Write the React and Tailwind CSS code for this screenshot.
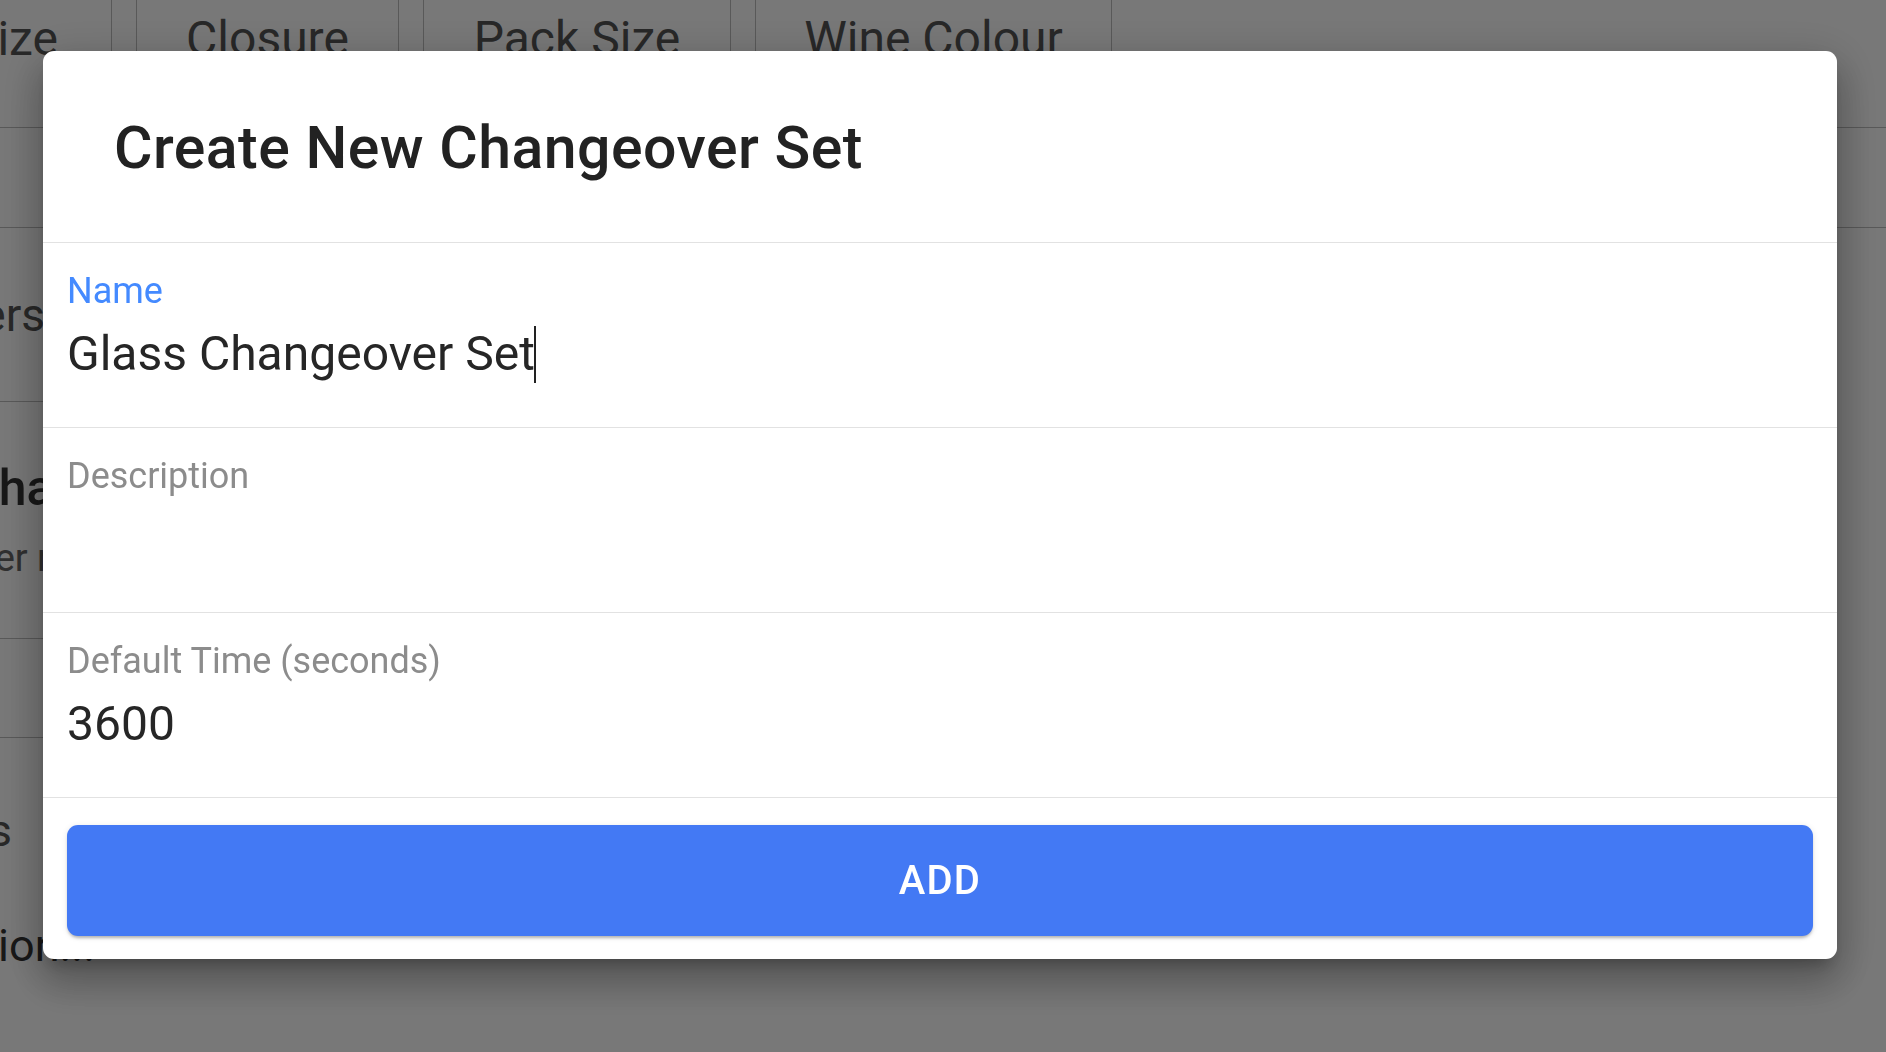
import React from "react";

function Sep({ single }) {
  return single ? (
    <div className="h-full w-0 shrink-0 border-l border-[#bdbdbd]" />
  ) : (
    <div className="h-full w-[26px] shrink-0 border-x border-[#bdbdbd]" />
  );
}

function Field({ label, value, focused, cursor }) {
  return (
    <div className="flex h-[185px] flex-col border-b border-[#e2e2e2] pl-6 pt-[30px]">
      <div
        className={
          "text-[36px] leading-none " + (focused ? "text-[#448aff]" : "text-[#8c8c8c]")
        }
      >
        {label}
      </div>
      <div className="mt-[21px] flex h-[48px] items-center text-[48px] leading-none text-[#262626]">
        <span>{value}</span>
        {cursor && <span className="ml-[-1px] h-[57px] w-[2px] bg-[#222]" />}
      </div>
    </div>
  );
}

export default function App() {
  return (
    <div className="relative h-[1052px] w-[1886px] overflow-hidden bg-white font-['Roboto',sans-serif]">
      {/* page behind the dialog */}
      <div className="flex flex-col text-[#555]">
        <div className="flex h-[128px] border-b border-[#bdbdbd] text-[48px] leading-none">
          <div className="flex w-[111px] shrink-0 justify-end overflow-hidden whitespace-nowrap pr-[53px] pt-[15px]">
            Bottle Size
          </div>
          <Sep />
          <div className="w-[261px] shrink-0 pt-[15px] text-center">Closure</div>
          <Sep />
          <div className="w-[306px] shrink-0 pt-[15px] text-center">Pack Size</div>
          <Sep />
          <div className="w-[355px] shrink-0 pt-[15px] text-center">Wine Colour</div>
          <Sep single />
          <div className="flex-1" />
        </div>
        <div className="h-[100px] border-b border-[#bdbdbd]" />
        <div className="flex w-[200px] flex-col">
          <div className="flex h-[174px] items-center justify-end overflow-hidden whitespace-nowrap border-b border-[#bdbdbd] pr-[155px] text-[46px] leading-none">
            Changeovers
          </div>
          <div className="flex h-[237px] flex-col justify-center overflow-hidden whitespace-nowrap border-b border-[#bdbdbd]">
            <div className="ml-[-34px] text-[50px] font-medium leading-none text-[#333]">Changeover Sets</div>
            <div className="mt-[26px] flex justify-end pr-[150px] text-[38px] leading-none text-[#666]">Changeover r</div>
          </div>
          <div className="h-[99px] border-b border-[#bdbdbd]" />
          <div className="flex h-[184px] items-center justify-end overflow-hidden whitespace-nowrap pr-[188px] text-[45px] leading-none">
            Settings
          </div>
          <div className="flex h-[46px] items-center overflow-hidden whitespace-nowrap text-[45px] leading-none text-[#333]">
            <span className="ml-[-92px]">Version...</span>
          </div>
        </div>
      </div>

      {/* backdrop + dialog */}
      <div className="fixed inset-0 flex items-start bg-black/[0.53] pl-[43px] pr-[49px] pt-[51px]">
        <div className="flex w-full flex-col overflow-hidden rounded-[11px] bg-white shadow-[0_11px_15px_-7px_rgba(0,0,0,0.25),0_24px_38px_3px_rgba(0,0,0,0.2),0_9px_46px_8px_rgba(0,0,0,0.14)]">
          <div className="flex h-[192px] items-center border-b border-[#e2e2e2] pl-[71px] pt-[1px]">
            <h2 className="text-[59px] font-medium leading-none tracking-[0.008em] text-[#222]">
              Create New Changeover Set
            </h2>
          </div>
          <Field label="Name" value="Glass Changeover Set" focused cursor />
          <Field label="Description" value="" />
          <Field label="Default Time (seconds)" value="3600" />
          <div className="px-6 pb-[23px] pt-[27px]">
            <button className="flex h-[111px] w-full items-center justify-center rounded-[11px] bg-[#4379f4] text-[40px] font-medium leading-none tracking-[0.03em] text-white shadow-[0_3px_3px_-1px_rgba(0,0,0,0.25),0_1px_6px_0_rgba(0,0,0,0.1)]">
              ADD
            </button>
          </div>
        </div>
      </div>
    </div>
  );
}
